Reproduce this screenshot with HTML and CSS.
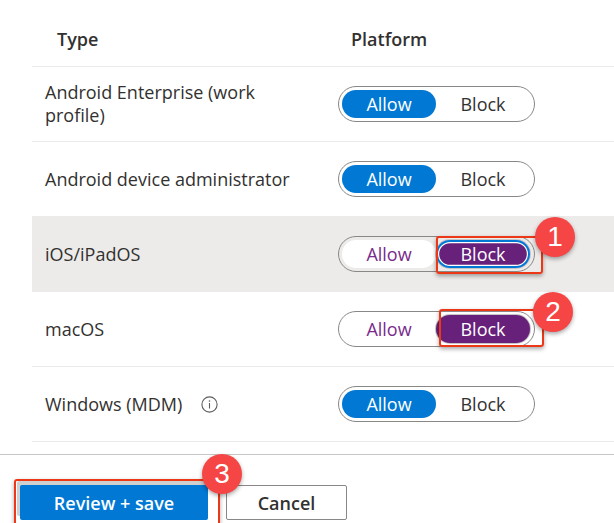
FILE: index.html
```html
<!DOCTYPE html>
<html>
<head>
<meta charset="utf-8">
<link rel="stylesheet" href="styles.css">
</head>
<body>
<div class="page">
  <div class="table">
    <div class="head">
      <div class="hc type">Type</div>
      <div class="hc plat">Platform</div>
    </div>
    <div class="row">
      <div class="name">Android Enterprise (work<br>profile)</div>
      <div class="cell">
        <div class="toggle"><span class="opt allow-on">Allow</span><span class="opt">Block</span></div>
      </div>
    </div>
    <div class="row">
      <div class="name">Android device administrator</div>
      <div class="cell">
        <div class="toggle"><span class="opt allow-on">Allow</span><span class="opt">Block</span></div>
      </div>
    </div>
    <div class="row gray">
      <div class="name">iOS/iPadOS</div>
      <div class="cell">
        <div class="toggle"><span class="opt allow-off white">Allow</span><span class="opt block-on focus">Block</span></div>
      </div>
    </div>
    <div class="row">
      <div class="name">macOS</div>
      <div class="cell">
        <div class="toggle"><span class="opt allow-off">Allow</span><span class="opt block-on ring">Block</span></div>
      </div>
    </div>
    <div class="row">
      <div class="name">Windows (MDM)
        <svg class="info" width="17" height="17" viewBox="0 0 17 17"><circle cx="8.5" cy="8.5" r="7.6" fill="none" stroke="#605e5c" stroke-width="1.1"/><rect x="7.95" y="7" width="1.1" height="5.5" fill="#605e5c"/><circle cx="8.5" cy="5" r="0.8" fill="#605e5c"/></svg>
      </div>
      <div class="cell">
        <div class="toggle"><span class="opt allow-on">Allow</span><span class="opt">Block</span></div>
      </div>
    </div>
  </div>
  <div class="footer">
    <button class="btn primary">Review + save</button>
    <button class="btn secondary">Cancel</button>
  </div>

  <div class="hl hl1"></div>
  <div class="hl hl2"></div>
  <div class="hl hl3"></div>
  <div class="badge b1">1</div>
  <div class="badge b2">2</div>
  <div class="badge b3">3</div>
</div>
</body>
</html>
```
FILE: styles.css
```css
html, body {
  margin: 0;
  padding: 0;
  background: #fff;
}
.page {
  position: relative;
  width: 614px;
  height: 523px;
  overflow: hidden;
  font-family: "Segoe UI", "Open Sans", "Noto Sans", sans-serif;
  color: #323130;
}
.table {
  margin-left: 32px;
}
.head {
  display: grid;
  grid-template-columns: 306px 1fr;
  height: 66px;
  border-bottom: 1px solid #edebe9;
}
.hc {
  font-size: 18px;
  font-weight: 600;
  line-height: 24px;
  padding-top: 27px;
}
.type { padding-left: 25px; }
.plat { padding-left: 13px; }
.row {
  display: grid;
  grid-template-columns: 306px 1fr;
  align-items: center;
  height: 74px;
  border-bottom: 1px solid #edebe9;
}
.row.gray {
  background: #edebe9;
}
.name {
  padding-left: 13px;
  font-size: 18px;
  line-height: 23px;
  display: flex;
  align-items: center;
}
.info {
  margin-left: 19px;
}
.cell {
  display: flex;
  align-items: center;
}
.toggle {
  display: flex;
  box-sizing: border-box;
  width: 197px;
  height: 36px;
  padding: 3px;
  border: 1px solid #8a8886;
  border-radius: 18px;
}
.opt {
  width: 94px;
  height: 28px;
  border-radius: 14px;
  display: flex;
  align-items: center;
  justify-content: center;
  font-size: 18px;
  color: #323130;
}
.allow-on {
  background: #0078d4;
  color: #fff;
}
.allow-off {
  color: #7a2b8c;
}
.white {
  background: #fff;
}
.block-on {
  background: #68217a;
  color: #fff;
}
.focus {
  box-shadow: inset 0 0 0 2px #0078d4, inset 0 0 0 3.2px #fff, 0 0 0 1px #c8c6c4;
}
.ring {
  box-shadow: 0 0 0 1px #c8c6c4;
}
.footer {
  margin-top: 12px;
  border-top: 1px solid #c8c6c4;
  padding: 30px 0 0 20px;
  display: flex;
  gap: 18px;
}
.btn {
  box-sizing: border-box;
  height: 35px;
  border-radius: 2px;
  font-family: "Segoe UI", "Open Sans", "Noto Sans", sans-serif;
  font-size: 18px;
  font-weight: 600;
  padding: 0;
}
.primary {
  width: 188px;
  background: #0078d4;
  color: #fff;
  border: none;
  box-shadow: -3px -4px 0 #cfcfcf;
}
.secondary {
  width: 121px;
  background: #fff;
  color: #323130;
  border: 1px solid #8a8886;
}
.hl {
  position: absolute;
  box-sizing: border-box;
  border: 2.5px solid #ec3816;
  border-radius: 3px;
  box-shadow: 0 2px 4px rgba(0,0,0,0.35);
}
.hl1 { left: 436px; top: 236px; width: 107px; height: 38px; }
.hl2 { left: 439px; top: 309px; width: 105px; height: 38px; }
.hl3 { left: 14px; top: 479px; width: 206px; height: 50px; }
.badge {
  position: absolute;
  width: 40px;
  height: 40px;
  border-radius: 50%;
  background: #f54545;
  color: #fff;
  font-family: "Liberation Sans", Arial, sans-serif;
  font-size: 28px;
  line-height: 40px;
  text-align: center;
  box-shadow: 0 2px 4px rgba(0,0,0,0.35);
}
.b1 { left: 535px; top: 217px; }
.b2 { left: 533px; top: 292px; }
.b3 { left: 202px; top: 454px; }
```
